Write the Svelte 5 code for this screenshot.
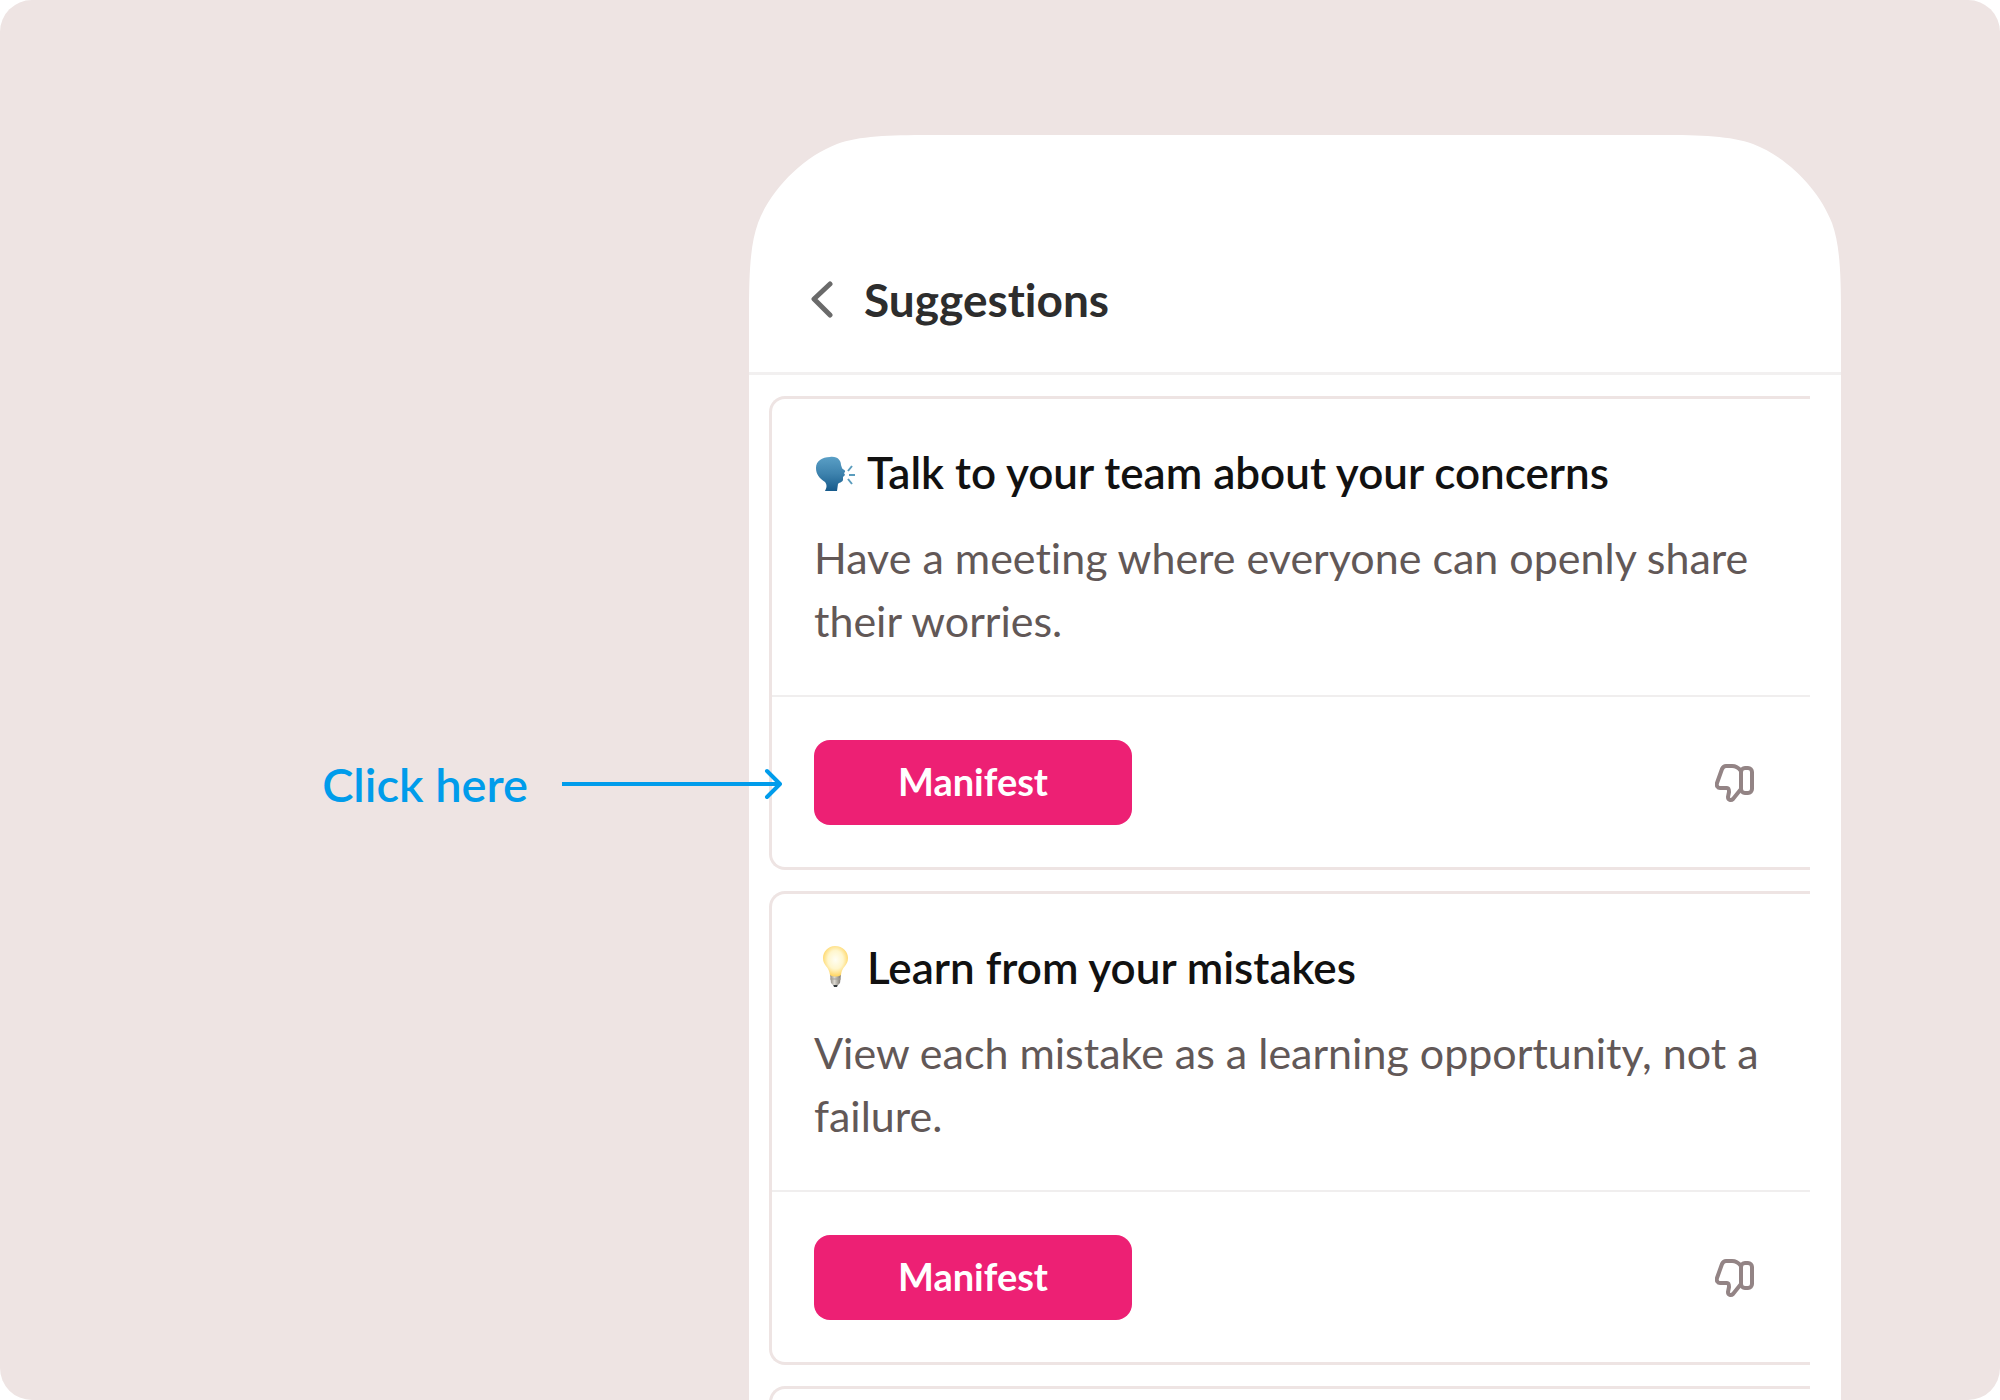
<script lang="ts">
    type Suggestion = {
        icon: 'talk' | 'bulb';
        title: string;
        text: string;
    };

    const suggestions: Suggestion[] = [
        {
            icon: 'talk',
            title: 'Talk to your team about your concerns',
            text: 'Have a meeting where everyone can openly share their worries.'
        },
        {
            icon: 'bulb',
            title: 'Learn from your mistakes',
            text: 'View each mistake as a learning opportunity, not a failure.'
        }
    ];
</script>

<main class="stage">
    <div class="hint">
        <span>Click here</span>
        <svg class="arrow" width="220" height="32" viewBox="0 0 220 32" aria-hidden="true">
            <path d="M0 16H217" />
            <path d="M205 3L218 16L205 29" stroke-linecap="round" stroke-linejoin="round" />
        </svg>
    </div>

    <section class="phone">
        <svg class="corner" width="180" height="180" viewBox="0 0 180 180" aria-hidden="true">
            <path d="M0 0V180C0 140 1 110 9 88C22 54 54 22 88 9C110 1 140 0 180 0Z" />
        </svg>
        <svg class="corner right" width="180" height="180" viewBox="0 0 180 180" aria-hidden="true">
            <path d="M0 0V180C0 140 1 110 9 88C22 54 54 22 88 9C110 1 140 0 180 0Z" />
        </svg>

        <header>
            <button class="back" aria-label="Back">
                <svg width="24" height="38" viewBox="0 0 24 38">
                    <path d="M21 3L5 18L21 34" />
                </svg>
            </button>
            <h1>Suggestions</h1>
        </header>

        <div class="list">
            {#each suggestions as item}
                <article class="card">
                    <div class="content">
                        <h2>
                            {#if item.icon === 'talk'}
                                <svg width="42" height="42" viewBox="0 0 42 42" aria-hidden="true">
                                    <defs>
                                        <linearGradient id="head" x1="0" y1="0" x2="0" y2="1">
                                            <stop offset="0" stop-color="#5a9fc6" />
                                            <stop offset="0.5" stop-color="#3d82ad" />
                                            <stop offset="1" stop-color="#165a8b" />
                                        </linearGradient>
                                    </defs>
                                    <path
                                        fill="url(#head)"
                                        d="M16 6C24 5 27 10 27 14L28 17C28 18 32 19 31 21L30 22L31 24L29 26L29 29C28 32 25 31 24 33L23 40H11C13 36 13 34 11 31C5 27 2 23 2 17C2 10 8 6 16 6Z"
                                    />
                                    <path
                                        d="M34 20L38 15M35 24H41M34 28L38 33"
                                        fill="none"
                                        stroke="#5a9cbd"
                                        stroke-width="2"
                                    />
                                </svg>
                            {:else}
                                <svg width="42" height="42" viewBox="0 0 42 42" aria-hidden="true">
                                    <defs>
                                        <radialGradient id="glow" cx="0.5" cy="0.45" r="0.55">
                                            <stop offset="0" stop-color="#fffef4" />
                                            <stop offset="0.55" stop-color="#fff6cc" />
                                            <stop offset="1" stop-color="#ffd45f" />
                                        </radialGradient>
                                        <linearGradient id="base">
                                            <stop offset="0" stop-color="#8d8980" />
                                            <stop offset="0.4" stop-color="#dad7d0" />
                                            <stop offset="1" stop-color="#77736c" />
                                        </linearGradient>
                                    </defs>
                                    <path fill="#33383b" d="M18 36H25L23 41H20Z" />
                                    <path fill="url(#base)" d="M16 28H27L26 37L24 39H19L17 37Z" />
                                    <path
                                        fill="url(#glow)"
                                        d="M21 0C29 0 34 6 34 12C34 20 28 20 27 29C24 31 19 31 16 29C15 20 9 20 9 12C9 6 14 0 21 0Z"
                                    />
                                    <path d="M16 33H27" stroke="#a5a199" />
                                </svg>
                            {/if}
                            <span>{item.title}</span>
                        </h2>
                        <p>{item.text}</p>
                    </div>
                    <div class="actions">
                        <button class="manifest">Manifest</button>
                        <button class="dislike" aria-label="Dislike">
                            <svg width="40" height="40" viewBox="0 0 40 40">
                                <path
                                    d="M26 8C23 4 21 3 17 3H11C9 3 8 4 7 6L2 20C1 23 3 25 5 25H12C14 25 14 27 14 29L13 34C13 37 16 38 18 36L26 26"
                                />
                                <rect x="26" y="5" width="11" height="25" rx="4" />
                            </svg>
                        </button>
                    </div>
                </article>
            {/each}
            <div class="card next"></div>
        </div>
    </section>
</main>

<style>
    :global(body) {
        background: #ffffff;
        margin: 0;
    }

    .stage {
        background: #eee4e3;
        border-radius: 32px;
        box-sizing: border-box;
        display: grid;
        font-family: Lato, 'Liberation Sans', sans-serif;
        font-variant-ligatures: none;
        grid-template-columns: 749fr 1092fr 159fr;
        height: 100vh;
        overflow: hidden;
        padding-top: 135px;
    }

    .hint {
        align-items: center;
        align-self: start;
        color: #009ceb;
        display: flex;
        font-size: 47px;
        font-weight: 600;
        gap: 34px;
        justify-content: flex-end;
        line-height: 60px;
        margin-right: -33px;
        padding-top: 619px;
        white-space: nowrap;
        z-index: 1;
    }

    .arrow {
        fill: none;
        flex: none;
        stroke: #009ceb;
        stroke-width: 4;
    }

    .phone {
        background: #ffffff;
        min-width: 0;
        position: relative;
    }

    .corner {
        fill: #eee4e3;
        left: 0;
        position: absolute;
        top: 0;
    }

    .corner.right {
        left: auto;
        right: 0;
        transform: scaleX(-1);
    }

    header {
        align-items: center;
        border-bottom: 3px solid #f2f0f0;
        box-sizing: border-box;
        display: flex;
        gap: 31px;
        height: 240px;
        padding: 92px 60px 0;
    }

    button {
        background: none;
        border: 0;
        cursor: pointer;
        font-family: inherit;
        font-variant-ligatures: inherit;
        padding: 0;
    }

    svg {
        display: block;
    }

    .back svg {
        fill: none;
        stroke: #6a6a6a;
        stroke-linecap: round;
        stroke-linejoin: round;
        stroke-width: 5;
    }

    h1 {
        color: #2d2d2d;
        font-size: 46px;
        font-weight: 700;
        line-height: 60px;
        margin: 0;
    }

    .list {
        display: flex;
        flex-direction: column;
        gap: 21px;
        padding: 21px 31px 0 20px;
    }

    .card {
        border: 3px solid #eee4e3;
        border-radius: 16px 0 0 16px;
        border-right: 0;
    }

    .card.next {
        height: 468px;
    }

    .content {
        border-bottom: 2px solid #f0eeee;
        box-sizing: border-box;
        height: 298px;
        padding: 41px 16px 0 42px;
    }

    h2 {
        align-items: center;
        color: #111111;
        display: flex;
        font-size: 44px;
        font-weight: 600;
        gap: 11px;
        line-height: 64px;
        margin: 0 0 22px;
    }

    p {
        color: #625857;
        font-size: 43px;
        line-height: 63px;
        margin: 0;
    }

    .actions {
        align-items: center;
        display: flex;
        justify-content: space-between;
        padding: 43px 55px 42px 42px;
    }

    .manifest {
        background: #ed2074;
        border-radius: 16px;
        color: #ffffff;
        font-size: 38px;
        font-weight: 700;
        height: 85px;
        padding-bottom: 4px;
        width: 318px;
    }

    .dislike svg {
        fill: none;
        stroke: #938485;
        stroke-linejoin: round;
        stroke-width: 4;
    }
</style>
